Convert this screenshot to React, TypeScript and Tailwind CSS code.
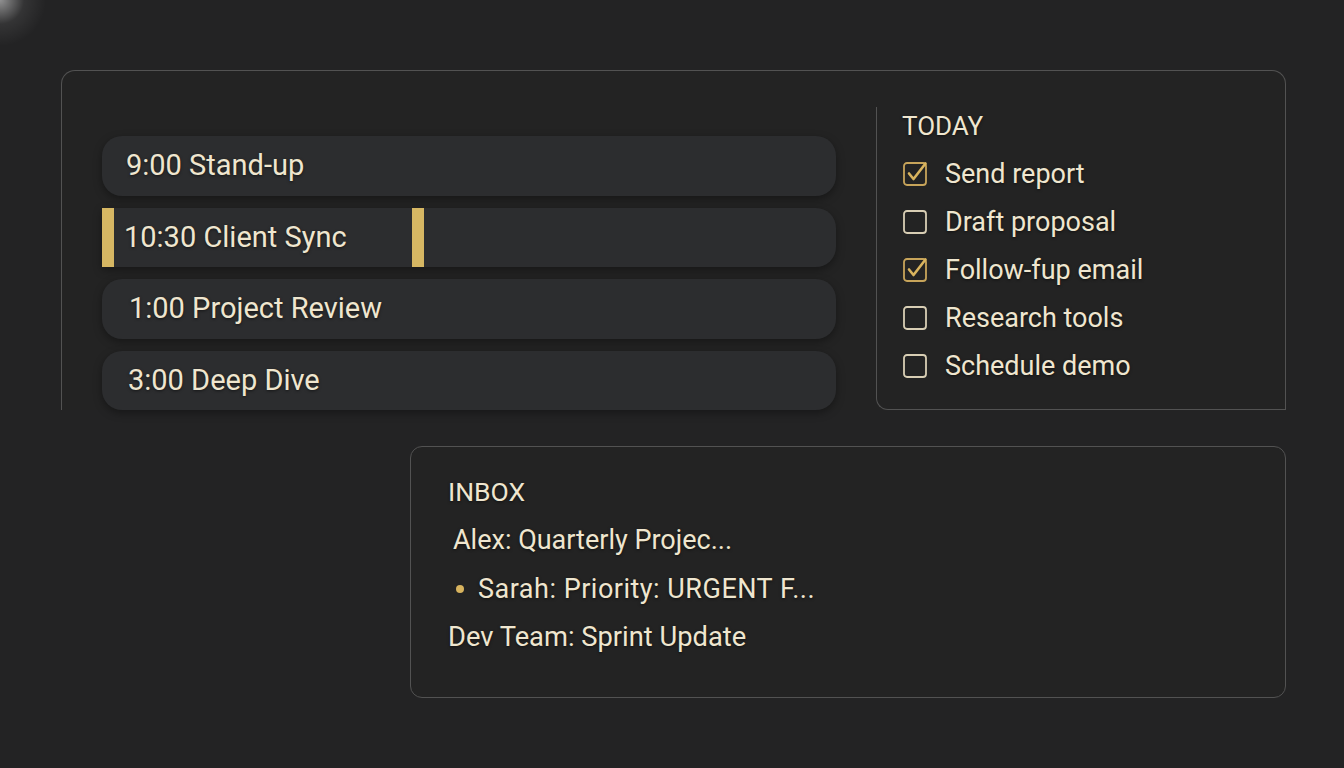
import React from 'react';

const EVENTS = [
  { id: 'standup', label: '9:00 Stand-up', pad: 'pl-[24px]' },
  { id: 'client', label: '10:30 Client Sync', pad: 'pl-[10px]', active: true },
  { id: 'review', label: '1:00 Project Review', pad: 'pl-[27px]' },
  { id: 'deep', label: '3:00 Deep Dive', pad: 'pl-[26px]' },
];

const TASKS = [
  { id: 't1', label: 'Send report', done: true },
  { id: 't2', label: 'Draft proposal', done: false },
  { id: 't3', label: 'Follow-fup email', done: true },
  { id: 't4', label: 'Research tools', done: false },
  { id: 't5', label: 'Schedule demo', done: false },
];

const CheckBox: React.FC<{ checked: boolean }> = ({ checked }) => (
  <svg width="26" height="26" viewBox="0 0 26 26" className="shrink-0 overflow-visible" aria-hidden>
    <rect
      x="1"
      y="2"
      width="22"
      height="22"
      rx="3"
      fill="none"
      stroke={checked ? '#c7a45a' : '#d8ceb4'}
      strokeWidth="1.8"
    />
    {checked ? (
      <path d="M6 12.5 L10.5 18 L22.5 2.5" fill="none" stroke="#d9b45e" strokeWidth="2.6" strokeLinecap="round" strokeLinejoin="round" />
    ) : null}
  </svg>
);

const App: React.FC = () => {
  return (
    <div className="min-h-[768px] w-full bg-[#232324] bg-[radial-gradient(circle_at_0_0,rgba(255,255,255,0.5),rgba(255,255,255,0.08)_24px,transparent_46px)] pt-[70px] pl-[61px] pr-[58px] font-['Roboto','Liberation_Sans',sans-serif] text-[#efe6cf] [text-shadow:0_1px_3px_rgba(0,0,0,0.55)]">
      <section className="flex h-[340px] rounded-t-[14px] border-t border-x border-[#525252] bg-[#232323]" aria-label="Schedule">
        <div className="flex w-[774px] shrink-0 flex-col gap-[12px] pl-[40px] pt-[65px]">
          {EVENTS.map((ev) =>
            ev.active ? (
              <div
                key={ev.id}
                className="flex h-[60px] w-[734px] items-center rounded-r-[20px] bg-[#2c2d2f] shadow-[0_3px_8px_rgba(0,0,0,0.35)]"
              >
                <span className="h-full w-[12px] shrink-0 bg-[#d6b763]" />
                <span className={`${ev.pad} w-[298px] shrink-0 text-[29px] leading-none`}>{ev.label}</span>
                <span className="h-full w-[12px] shrink-0 bg-[#d6b763]" />
              </div>
            ) : (
              <div
                key={ev.id}
                className={`flex h-[60px] w-[734px] items-center rounded-[20px] bg-[#2c2d2f] shadow-[0_3px_8px_rgba(0,0,0,0.35)] ${ev.pad}`}
              >
                <span className="text-[29px] leading-none">{ev.label}</span>
              </div>
            ),
          )}
        </div>

        <div className="ml-[40px] mt-[36px] flex flex-1 flex-col rounded-bl-[12px] border-l border-b border-[#525252] pl-[25px] pt-[3px]">
          <p className="text-[26px] leading-[32px]">TODAY</p>
          <ul className="mt-[8px] flex flex-col">
            {TASKS.map((t) => (
              <li key={t.id} className="flex h-[48px] items-center gap-[16px] pl-px">
                <CheckBox checked={t.done} />
                <span className="text-[27px] leading-none">{t.label}</span>
              </li>
            ))}
          </ul>
        </div>
      </section>

      <section
        className="ml-[349px] mt-[36px] h-[252px] rounded-[12px] border border-[#525252] bg-[#232323] pl-[37px] pt-[21px]"
        aria-label="Inbox"
      >
        <p className="flex h-[48px] items-center text-[26.5px]">INBOX</p>
        <p className="flex h-[48.5px] items-center pl-[5px] text-[27px]">Alex: Quarterly Projec...</p>
        <p className="flex h-[48.5px] items-center pl-[8px] text-[27px] tracking-[0.5px]">
          <span className="mr-[14px] inline-block h-[8px] w-[8px] rounded-full bg-[#d7b35e]" />
          Sarah: Priority: URGENT F...
        </p>
        <p className="flex h-[48.5px] items-center text-[27.3px]">Dev Team: Sprint Update</p>
      </section>
    </div>
  );
};

export default App;
